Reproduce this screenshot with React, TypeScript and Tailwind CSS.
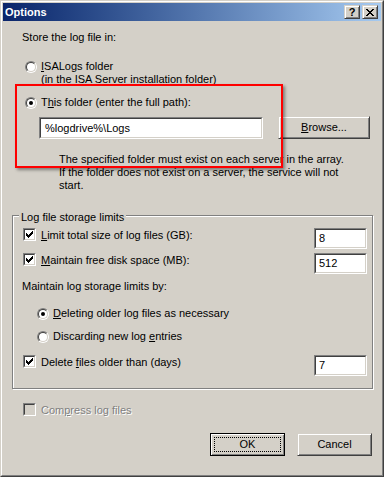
import React from "react";

function U({ children }: { children: React.ReactNode }) {
  return <span className="underline decoration-1 underline-offset-[1px]">{children}</span>;
}

function Radio({ checked }: { checked?: boolean }) {
  return (
    <div className="w-[12px] h-[12px] shrink-0 rounded-full border border-t-[#808080] border-l-[#808080] border-r-white border-b-white">
      <div className="w-full h-full rounded-full border border-t-[#404040] border-l-[#404040] border-r-[#d4d0c8] border-b-[#d4d0c8] bg-white flex items-center justify-center">
        {checked && <div className="w-[4px] h-[4px] rounded-full bg-black" />}
      </div>
    </div>
  );
}

function Check({ checked, disabled }: { checked?: boolean; disabled?: boolean }) {
  return (
    <div className="w-[13px] h-[13px] shrink-0 border border-t-[#808080] border-l-[#808080] border-r-white border-b-white">
      <div
        className={
          disabled
            ? "relative w-full h-full border border-t-[#404040] border-l-[#404040] border-r-[#d4d0c8] border-b-[#d4d0c8] bg-[#d4d0c8]"
            : "relative w-full h-full border border-t-[#404040] border-l-[#404040] border-r-[#d4d0c8] border-b-[#d4d0c8] bg-white"
        }
      >
        {checked && (
          <svg
            className="absolute left-[1px] top-[1px]"
            width="7"
            height="7"
            viewBox="0 0 7 7"
            shapeRendering="crispEdges"
          >
            <path
              d="M6 0h1v1h-1z M5 1h2v1h-2z M0 2h1v1h-1z M4 2h3v1h-3z M0 3h2v1h-2z M3 3h3v1h-3z M0 4h5v1h-5z M1 5h3v1h-3z M2 6h1v1h-1z"
              fill="#000"
            />
          </svg>
        )}
      </div>
    </div>
  );
}

function NumField({ value }: { value: string }) {
  return (
    <div className="w-[53px] h-[21px] shrink-0 border border-t-[#808080] border-l-[#808080] border-r-white border-b-white">
      <div className="w-full h-full border border-t-[#404040] border-l-[#404040] border-r-[#d4d0c8] border-b-[#d4d0c8] bg-white flex items-center pl-[3px]">
        {value}
      </div>
    </div>
  );
}

function CaptionButton({ children }: { children: React.ReactNode }) {
  return (
    <div className="w-[16px] h-[14px] bg-[#d4d0c8] border border-t-[#d4d0c8] border-l-[#d4d0c8] border-r-[#404040] border-b-[#404040] shadow-[inset_1px_1px_0_#fff,inset_-1px_-1px_0_#808080] flex items-center justify-center">
      {children}
    </div>
  );
}

export default function App() {
  return (
    <div className="w-[384px] h-[477px] bg-[#d4d0c8] border border-t-[#d4d0c8] border-l-[#d4d0c8] border-r-[#404040] border-b-[#404040] font-['Liberation_Sans',Arial,sans-serif] text-[11px] leading-[13px] text-black">
      <div className="h-full border border-t-white border-l-white border-r-[#808080] border-b-[#808080] p-px flex flex-col">
        {/* Title bar */}
        <div className="h-[18px] shrink-0 flex items-center justify-between pl-[2px] pr-[3px] bg-linear-to-r from-[#0a246a] to-[#a6caf0]">
          <span className="text-white font-bold">Options</span>
          <div className="flex items-center gap-[2px]">
            <CaptionButton>
              <span className="font-bold text-[11px] leading-none text-black mt-px">?</span>
            </CaptionButton>
            <CaptionButton>
              <svg width="8" height="7" viewBox="0 0 8 7" shapeRendering="crispEdges">
                <path
                  d="M0 0h2v1h-2z M6 0h2v1h-2z M1 1h2v1h-2z M5 1h2v1h-2z M2 2h4v1h-4z M3 3h2v1h-2z M2 4h4v1h-4z M1 5h2v1h-2z M5 5h2v1h-2z M0 6h2v1h-2z M6 6h2v1h-2z"
                  fill="#000"
                />
              </svg>
            </CaptionButton>
          </div>
        </div>

        {/* Body */}
        <div className="relative flex-1 flex flex-col">
          <div className="ml-[19px] mt-[10px]">Store the log file in:</div>

          <div className="ml-[22px] mt-[16px] flex items-start gap-[4px]">
            <div className="mt-px">
              <Radio />
            </div>
            <div>
              <U>I</U>SALogs folder
              <br />
              (in the ISA Server installation folder)
            </div>
          </div>

          <div className="ml-[22px] mt-[10px] flex items-start gap-[4px]">
            <div className="mt-px">
              <Radio checked />
            </div>
            <div>
              T<U>h</U>is folder (enter the full path):
            </div>
          </div>

          <div className="ml-[36px] mt-[7px] flex items-start">
            <div className="mt-px w-[224px] h-[22px] border border-t-[#808080] border-l-[#808080] border-r-white border-b-white">
              <div className="w-full h-full border border-t-[#404040] border-l-[#404040] border-r-[#d4d0c8] border-b-[#d4d0c8] bg-white flex items-center pl-[4px]">
                %logdrive%\Logs
              </div>
            </div>
            <div className="ml-[15px] w-[92px] h-[23px] bg-[#d4d0c8] border border-t-[#d4d0c8] border-l-[#d4d0c8] border-r-[#404040] border-b-[#404040] shadow-[inset_1px_1px_0_#fff,inset_-1px_-1px_0_#808080] flex items-center justify-center">
              <span>
                <U>B</U>rowse...
              </span>
            </div>
          </div>

          <div className="ml-[56px] mt-[14px]">
            The specified folder must exist on each server in the array.
            <br />
            If the folder does not exist on a server, the service will not
            <br />
            start.
          </div>

          {/* Group box */}
          <div className="relative ml-[9px] mt-[23px] w-[361px] h-[174px] shrink-0 border border-[#808080] shadow-[1px_1px_0_#fff,inset_1px_1px_0_#fff] pl-[10px] pr-[5px] pt-[12px] flex flex-col">
            <div className="absolute top-[-5px] left-[6px] px-[2px] bg-[#d4d0c8]">Log file storage limits</div>

            <div className="flex items-start justify-between">
              <div className="flex items-start gap-[5px]">
                <Check checked />
                <span className="mt-px">
                  <U>L</U>imit total size of log files (GB):
                </span>
              </div>
              <NumField value="8" />
            </div>

            <div className="mt-[4px] flex items-start justify-between">
              <div className="flex items-start gap-[5px]">
                <Check checked />
                <span className="mt-px">
                  <U>M</U>aintain free disk space (MB):
                </span>
              </div>
              <NumField value="512" />
            </div>

            <div className="mt-[6px] ml-[-1px]">Maintain log storage limits by:</div>

            <div className="ml-[14px] mt-[14px] flex items-start gap-[4px]">
              <div className="mt-px">
                <Radio checked />
              </div>
              <span>
                <U>D</U>eleting older log files as necessary
              </span>
            </div>

            <div className="ml-[14px] mt-[10px] flex items-start gap-[4px]">
              <div className="mt-px">
                <Radio />
              </div>
              <span>
                Discarding new log <U>e</U>ntries
              </span>
            </div>

            <div className="mt-[12px] flex items-start justify-between">
              <div className="flex items-start gap-[5px]">
                <Check checked />
                <span className="mt-px">
                  Delete <U>f</U>iles older than (days)
                </span>
              </div>
              <NumField value="7" />
            </div>
          </div>

          <div className="ml-[20px] mt-[14px] flex items-start gap-[5px]">
            <Check disabled />
            <span className="mt-px text-[#808080] [text-shadow:1px_1px_0_#fff]">
              Com<U>p</U>ress log files
            </span>
          </div>

          <div className="mt-[16px] pr-[9px] flex justify-end gap-[12px]">
            <div className="w-[75px] h-[23px] bg-[#d4d0c8] border border-black shadow-[inset_1px_1px_0_#fff,inset_-1px_-1px_0_#808080] flex p-[3px]">
              <div className="flex-1 border border-dotted border-black flex items-center justify-center">OK</div>
            </div>
            <div className="w-[75px] h-[23px] bg-[#d4d0c8] border border-t-[#d4d0c8] border-l-[#d4d0c8] border-r-[#404040] border-b-[#404040] shadow-[inset_1px_1px_0_#fff,inset_-1px_-1px_0_#808080] flex items-center justify-center">
              Cancel
            </div>
          </div>

          {/* Red highlight annotation */}
          <div className="absolute left-[12px] top-[63px] w-[268px] h-[84px] border-2 border-[#ff0000] shadow-[2px_2px_3px_rgba(0,0,0,0.4)] pointer-events-none" />
        </div>
      </div>
    </div>
  );
}
